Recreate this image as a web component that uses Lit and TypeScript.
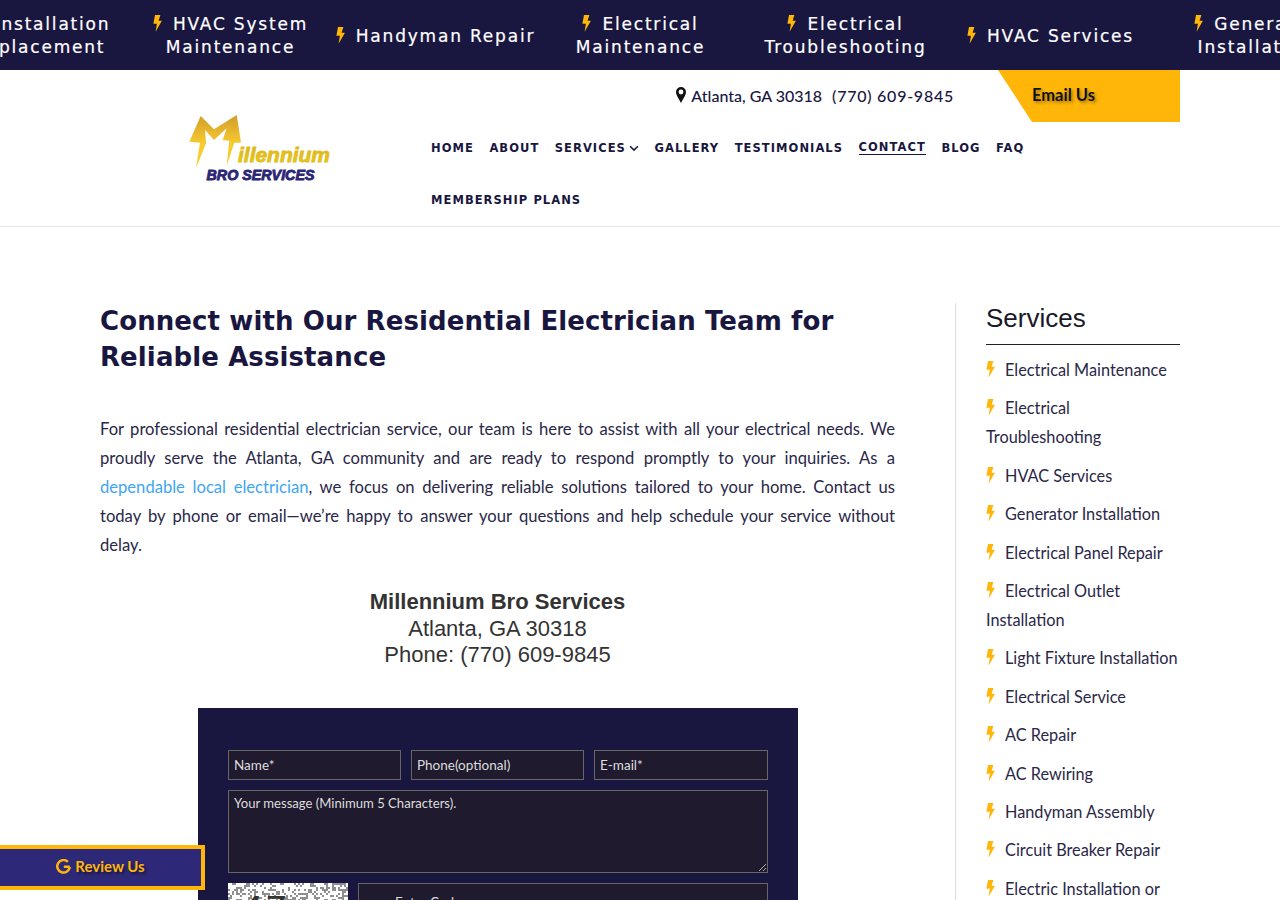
import { LitElement, html, css, svg } from "lit";
import { customElement } from "lit/decorators.js";

const bolt = (cls = "bolt") => html`<svg class=${cls} viewBox="0 0 9 17" aria-hidden="true"><path fill="#ffb609" d="M2 0 H7.4 L5.6 5.8 H8.9 L2.6 16.8 L3.9 8.8 H0.4 Z"/></svg>`;

const ticker: string[][] = [
  ["AC Installation", "or Replacement"],
  ["HVAC System", "Maintenance"],
  ["Handyman Repair"],
  ["Electrical", "Maintenance"],
  ["Electrical", "Troubleshooting"],
  ["HVAC Services"],
  ["Generator", "Installation"],
];

const nav = ["HOME", "ABOUT", "SERVICES", "GALLERY", "TESTIMONIALS", "CONTACT", "BLOG", "FAQ", "MEMBERSHIP PLANS"];

const services = [
  "Electrical Maintenance", "Electrical Troubleshooting", "HVAC Services", "Generator Installation",
  "Electrical Panel Repair", "Electrical Outlet Installation", "Light Fixture Installation", "Electrical Service",
  "AC Repair", "AC Rewiring", "Handyman Assembly", "Circuit Breaker Repair", "Electric Installation or Replacement",
];

function noise() {
  const out = [];
  let s = 12345;
  for (let y = 0; y < 60; y += 2) {
    for (let x = 0; x < 120; x += 2) {
      s = (s * 1103515245 + 12345) & 0x7fffffff;
      if ((s >> 16) % 100 < 38) out.push(svg`<rect x=${x} y=${y} width="2" height="2" fill="#8f8f8f"/>`);
    }
  }
  return out;
}

@customElement("app-root")
export class AppRoot extends LitElement {
  static styles = css`
    :host { display: block; font-family: "Lato", "Open Sans", sans-serif; color: #191640; background: #fff; overflow: hidden; }
    * { box-sizing: border-box; }
    .bolt { width: 9px; height: 17px; flex: none; }
    .ticker { height: 70px; padding-top: 2px; background: #191640; overflow: hidden; display: flex; align-items: center; margin-left: -77px; width: 1600px; }
    .tick { flex: 0 0 205px; color: #fff; font-family: "DejaVu Sans", sans-serif; font-size: 17px; line-height: 23px; letter-spacing: 1.8px; text-align: center; white-space: nowrap; -webkit-text-stroke: 0.2px #fff; }
    .tick .bolt { vertical-align: -2px; margin-right: 11px; }
    .header { border-bottom: 1px solid #e6e6e6; }
    .hwrap { width: 1080px; margin-left: 100px; display: grid; grid-template-columns: 331px 1fr; }
    .logo { display: flex; justify-content: center; padding: 43px 0 0 0; width: 320px; }
    .logo svg { width: 144px; height: 70px; display: block; }
    .top { display: flex; justify-content: flex-end; height: 52px; align-items: center; font-size: 16px; font-weight: 500; }
    .top .loc { display: flex; align-items: center; gap: 5px; margin-right: 44px; padding-bottom: 2px; }
    .top .loc svg { width: 10px; height: 16px; }
    .top .phone { margin-left: 5px; letter-spacing: 0.75px; }
    .email { width: 182px; height: 52px; padding-bottom: 3px; background: #ffb609; clip-path: polygon(0 0, 100% 0, 100% 100%, 34px 100%); display: flex; align-items: center; padding-left: 34px; color: #111; font-size: 16.5px; font-weight: 700; text-shadow: 2px 2px 3px rgba(0,0,0,.35); }
    .nav { display: flex; flex-wrap: wrap; column-gap: 15.5px; }
    .nav a { height: 52px; display: flex; align-items: center; font-family: "DejaVu Sans", sans-serif; font-weight: 700; font-size: 11.5px; letter-spacing: 1.05px; color: #191640; }
    .nav a span.u { border-bottom: 1.5px solid #191640; line-height: 13px; }
    .nav a svg { width: 10px; height: 7px; margin-left: 3px; }
    .nav .br { flex-basis: 100%; height: 0; }
    .main { width: 1080px; margin: 76px 0 0 100px; display: grid; grid-template-columns: 795px 1fr; }
    h1 { margin: 0; font-family: "DejaVu Sans", sans-serif; font-size: 26px; line-height: 36px; font-weight: 700; color: #191640; letter-spacing: 0.1px; }
    .copy { margin: 40px 0 0; font-size: 16.6px; word-spacing: 2px; line-height: 29px; text-align: justify; color: #2a2748; }
    .copy a { color: #3ea6f2; text-decoration: none; }
    .addr { margin-top: 28px; text-align: center; font-family: "Liberation Sans", sans-serif; font-size: 22px; line-height: 26px; color: #333; }
    .addr b { display: block; line-height: 28px; }
    .form { width: 600px; margin: 40px 0 0 98px; background: #191640; padding: 42px 30px 40px; display: flex; flex-direction: column; gap: 10px; }
    .row { display: grid; grid-template-columns: 173px 173px 174px; gap: 10px; }
    .field { height: 30px; background: #1f1a2e; border: 1px solid #666; color: #ddd; font-size: 13.5px; display: flex; align-items: center; padding: 0 5px; }
    .area { position: relative; height: 83px; align-items: flex-start; padding-top: 4px; font-size: 13.1px; }
    .grip { position: absolute; right: 1px; bottom: 1px; width: 7px; height: 7px; }
    .cap { display: grid; grid-template-columns: 120px 1fr; gap: 10px; }
    .capimg { position: relative; height: 60px; background: #fff; overflow: hidden; }
    .capimg svg { display: block; width: 120px; height: 60px; }
    .captxt { position: absolute; left: 12px; top: 6px; font-family: "DejaVu Sans", sans-serif; font-style: italic; font-size: 34px; letter-spacing: 2px; color: #333; }
    .capin { height: 60px; padding-left: 36px; padding-top: 10px; align-items: flex-start; }
    .side { margin-left: 60px; border-left: 1px solid #ddd; padding-left: 30px; }
    .side h2 { margin: 0; font-family: "Liberation Sans", sans-serif; font-weight: 400; font-size: 26px; line-height: 30px; color: #191929; padding-bottom: 11px; border-bottom: 1px solid #222; }
    .side ul { list-style: none; margin: 10px 0 0; padding: 0; }
    .side li { font-size: 16.3px; line-height: 29px; margin-bottom: 9.4px; color: #2a2748; }
    .side li .bolt { vertical-align: -2px; margin-right: 10px; }
    .review { position: fixed; left: -4px; top: 845px; width: 209px; height: 45px; padding-bottom: 3px; background: #2e2878; border: 4px solid #ffb609; color: #ffb609; display: flex; align-items: center; justify-content: center; gap: 4px; font-size: 15px; font-weight: 700; text-shadow: 2px 2px 3px rgba(0,0,0,.5); }
    .review svg { width: 15px; height: 15px; }
  `;

  render() {
    return html`
      <div class="ticker">
        ${ticker.map((t) => html`<div class="tick">${bolt()}${t[0]}${t[1] ? html`<br />${t[1]}` : ""}</div>`)}
      </div>
      <header class="header">
        <div class="hwrap">
          <div class="logo">
            <svg viewBox="0 0 144 70">
              <defs>
                <linearGradient id="lg" x1="0" y1="0" x2="0" y2="1"><stop offset="0" stop-color="#d19c2c"/><stop offset="0.55" stop-color="#f8cb2e"/><stop offset="1" stop-color="#f4d021"/></linearGradient>
                <linearGradient id="lt" x1="0" y1="0" x2="0" y2="1"><stop offset="0" stop-color="#d9a92a"/><stop offset="1" stop-color="#ecd016"/></linearGradient>
              </defs>
              <path fill="url(#lg)" d="M12.7 3 L26 16.3 L48.7 2 L53 29.7 L46.3 29.7 L38.7 52.7 L41.3 27.7 L34.7 27 L38.7 15.3 L26 27 L17 17 L18 30.3 L8 55.3 L12 29.7 L1.3 28.7 Z"/>
              <text x="50" y="48.5" font-family="Liberation Sans" font-weight="700" font-style="italic" font-size="21" fill="url(#lt)" textLength="92" lengthAdjust="spacingAndGlyphs" stroke="#e0bd1e" stroke-width=".9">illennium</text>
              <text x="18.5" y="66.5" font-family="Liberation Sans" font-weight="700" font-style="italic" font-size="15" fill="#2a2575" textLength="108" lengthAdjust="spacingAndGlyphs" stroke="#2a2575" stroke-width=".9">BRO SERVICES</text>
            </svg>
          </div>
          <div>
            <div class="top">
              <div class="loc">
                <svg viewBox="0 0 10 16"><path fill="#111" fill-rule="evenodd" d="M5 0a5 5 0 0 1 5 5c0 3-3 7-5 11C3 12 0 8 0 5a5 5 0 0 1 5-5Zm0 2.6A2.4 2.4 0 1 0 5 7.4 2.4 2.4 0 0 0 5 2.6Z"/></svg>
                <span>Atlanta, GA 30318</span><span class="phone">(770) 609-9845</span>
              </div>
              <div class="email">Email Us</div>
            </div>
            <nav class="nav">
              ${nav.map((n) => html`
                ${n === "MEMBERSHIP PLANS" ? html`<span class="br"></span>` : ""}
                <a>${n === "CONTACT" ? html`<span class="u">${n}</span>` : n}${n === "SERVICES" ? html`<svg viewBox="0 0 9 6"><path d="M1 1l3.5 3.5L8 1" fill="none" stroke="#191640" stroke-width="1.4"/></svg>` : ""}</a>`)}
            </nav>
          </div>
        </div>
      </header>
      <div class="main">
        <main>
          <h1>Connect with Our Residential Electrician Team for Reliable Assistance</h1>
          <p class="copy">For professional residential electrician service, our team is here to assist with all your electrical needs. We proudly serve the Atlanta, GA community and are ready to respond promptly to your inquiries. As a <a>dependable local electrician</a>, we focus on delivering reliable solutions tailored to your home. Contact us today by phone or email—we’re happy to answer your questions and help schedule your service without delay.</p>
          <div class="addr"><b>Millennium Bro Services</b>Atlanta, GA 30318<br />Phone: (770) 609-9845</div>
          <form class="form">
            <div class="row">
              <div class="field">Name*</div><div class="field">Phone(optional)</div><div class="field">E-mail*</div>
            </div>
            <div class="field area">Your message (Minimum 5 Characters).
              <svg class="grip" viewBox="0 0 7 7"><path d="M0 7 7 0M4 7l3-3" stroke="#aaa" fill="none"/></svg>
            </div>
            <div class="cap">
              <div class="capimg"><svg viewBox="0 0 120 60">${noise()}</svg><span class="captxt">47mv25</span></div>
              <div class="field capin">Enter Code</div>
            </div>
          </form>
        </main>
        <aside class="side">
          <h2>Services</h2>
          <ul>${services.map((s) => html`<li>${bolt()}${s}</li>`)}</ul>
        </aside>
      </div>
      <div class="review">
        <svg viewBox="0 0 24 24"><path fill="none" stroke="#ffb609" stroke-width="4" d="M22 12.5H12.5M22 12.5a10 10 0 1 1-3-8"/></svg>
        <span>Review Us</span>
      </div>
    `;
  }
}
